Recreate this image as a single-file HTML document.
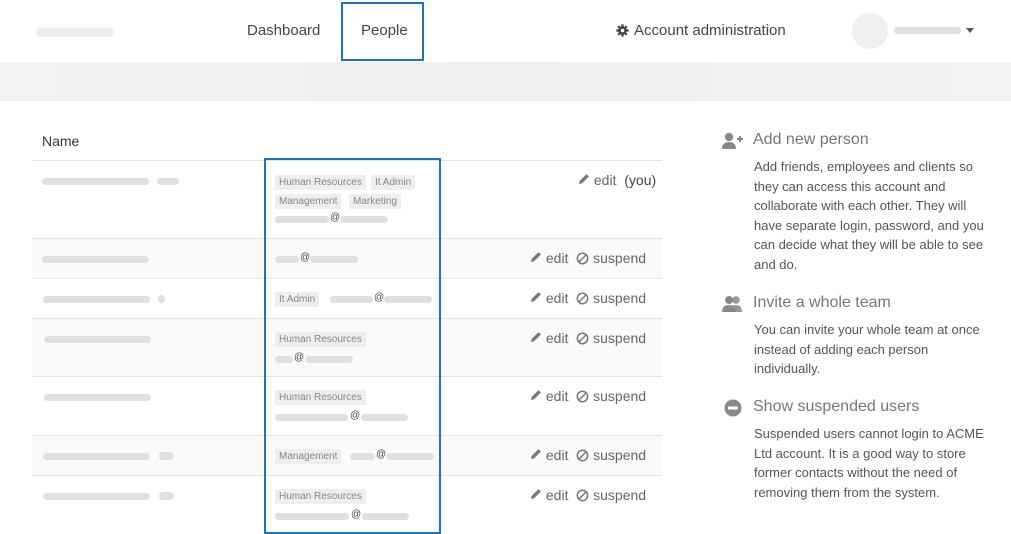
<!DOCTYPE html>
<html><head><meta charset="utf-8"><style>
*{margin:0;padding:0;box-sizing:border-box}
body{width:1011px;height:534px;overflow:hidden;background:#fff;font-family:"Liberation Sans",sans-serif;color:#555;position:relative}
.a{position:absolute}
.bar{position:absolute;height:7px;border-radius:4px;background:#e0e0e0}
.t{position:absolute;font-size:10px;color:#888;background:#eee;padding:0 4px;height:15px;line-height:15px;white-space:nowrap}
.at{position:absolute;font-size:10px;color:#444}
.line{position:absolute;left:32px;width:630px;height:1px;background:#e3e3e3}
.act{position:absolute;font-size:14px;color:#666;white-space:nowrap}
.side{position:absolute;left:754px;font-size:13px;line-height:19.6px;color:#555;white-space:nowrap}
.st{position:absolute;left:753px;font-size:16px;color:#777}
</style></head><body>
<div class="bar" style="left:36px;top:28px;width:78px;height:9px;background:#ececec"></div>
<div class="a" style="left:247px;top:22px;font-size:15px;color:#444">Dashboard</div>
<div class="a" style="left:341px;top:2px;width:83px;height:59px;border:2px solid #1e73be"></div>
<div class="a" style="left:361px;top:22px;font-size:15px;color:#444">People</div>
<svg class="a" style="left:616px;top:24px" width="13" height="13" viewBox="0 0 16 16"><g fill="#444"><circle cx="8" cy="8" r="5"/><rect x="6.5" y="0.5" width="3" height="15"/><rect x="0.5" y="6.5" width="15" height="3"/><rect x="6.5" y="0.5" width="3" height="15" transform="rotate(45 8 8)"/><rect x="6.5" y="0.5" width="3" height="15" transform="rotate(-45 8 8)"/></g><circle cx="8" cy="8" r="2.2" fill="#fff"/></svg>
<div class="a" style="left:634px;top:22px;font-size:15px;color:#444">Account administration</div>
<div class="a" style="left:852px;top:13px;width:36px;height:36px;border-radius:50%;background:#efefef"></div>
<div class="bar" style="left:894px;top:27px;width:67px;height:7px"></div>
<div class="a" style="left:966px;top:28px;width:0;height:0;border-left:4px solid transparent;border-right:4px solid transparent;border-top:5px solid #555"></div>
<div class="a" style="left:0;top:62px;width:1011px;height:39px;background:linear-gradient(90deg,#f3f3f3,#efefef 50%,#f3f3f3)"></div>

<div class="a" style="left:42px;top:133px;font-size:14px;color:#333">Name</div>
<div class="a" style="left:32px;top:238px;width:630px;height:40px;background:#fafafa"></div>
<div class="a" style="left:32px;top:318px;width:630px;height:58px;background:#fafafa"></div>
<div class="a" style="left:32px;top:435px;width:630px;height:40px;background:#fafafa"></div>
<div class="line" style="top:160px"></div>
<div class="line" style="top:238px"></div>
<div class="line" style="top:278px"></div>
<div class="line" style="top:318px"></div>
<div class="line" style="top:376px"></div>
<div class="line" style="top:435px"></div>
<div class="line" style="top:475px"></div>

<div class="bar" style="left:42px;top:178px;width:107px"></div>
<div class="bar" style="left:157px;top:178px;width:22px"></div>
<div class="bar" style="left:42px;top:256px;width:107px"></div>
<div class="bar" style="left:43px;top:296px;width:107px"></div>
<div class="bar" style="left:158px;top:295px;width:7px;height:8px"></div>
<div class="bar" style="left:44px;top:336px;width:107px"></div>
<div class="bar" style="left:44px;top:394px;width:107px"></div>
<div class="bar" style="left:43px;top:453px;width:107px"></div>
<div class="bar" style="left:159px;top:452px;width:15px;height:8px"></div>
<div class="bar" style="left:43px;top:493px;width:107px"></div>
<div class="bar" style="left:159px;top:492px;width:15px;height:8px"></div>

<div class="t" style="left:275px;top:175px">Human Resources</div>
<div class="t" style="left:371px;top:175px">It Admin</div>
<div class="t" style="left:275px;top:194px">Management</div>
<div class="t" style="left:349px;top:194px">Marketing</div>
<div class="bar" style="left:275px;top:216px;width:54px"></div><div class="at" style="left:330px;top:212px">@</div><div class="bar" style="left:340px;top:216px;width:48px"></div>
<div class="bar" style="left:275px;top:256px;width:24px"></div><div class="at" style="left:300px;top:252px">@</div><div class="bar" style="left:310px;top:256px;width:48px"></div>
<div class="t" style="left:275px;top:292px">It Admin</div>
<div class="bar" style="left:330px;top:296px;width:43px"></div><div class="at" style="left:374px;top:292px">@</div><div class="bar" style="left:384px;top:296px;width:48px"></div>
<div class="t" style="left:275px;top:332px">Human Resources</div>
<div class="bar" style="left:275px;top:356px;width:18px"></div><div class="at" style="left:294px;top:352px">@</div><div class="bar" style="left:305px;top:356px;width:48px"></div>
<div class="t" style="left:275px;top:390px">Human Resources</div>
<div class="bar" style="left:275px;top:414px;width:73px"></div><div class="at" style="left:350px;top:410px">@</div><div class="bar" style="left:361px;top:414px;width:47px"></div>
<div class="t" style="left:275px;top:449px">Management</div>
<div class="bar" style="left:350px;top:453px;width:25px"></div><div class="at" style="left:376px;top:449px">@</div><div class="bar" style="left:386px;top:453px;width:48px"></div>
<div class="t" style="left:275px;top:489px">Human Resources</div>
<div class="bar" style="left:275px;top:513px;width:74px"></div><div class="at" style="left:351px;top:509px">@</div><div class="bar" style="left:362px;top:513px;width:47px"></div>

<div class="a" style="left:264px;top:158px;width:177px;height:376px;border:2px solid #1e73be"></div>

<div class="act" style="left:578px;top:172px"><svg width="12" height="12" viewBox="0 0 12 12"><path d="M1 11l.6-3L8.5 1.1l2.4 2.4L4 10.4z" fill="#777"/></svg> edit &nbsp;<span style="color:#444">(you)</span></div>
<div class="act" style="left:530px;top:250px"><svg width="12" height="12" viewBox="0 0 12 12"><path d="M1 11l.6-3L8.5 1.1l2.4 2.4L4 10.4z" fill="#777"/></svg> edit &nbsp;<svg width="13" height="13" viewBox="0 0 14 14" style="vertical-align:-2px"><circle cx="7" cy="7" r="5.6" fill="none" stroke="#777" stroke-width="1.6"/><path d="M3 11L11 3" stroke="#777" stroke-width="1.6"/></svg> suspend</div>
<div class="act" style="left:530px;top:290px"><svg width="12" height="12" viewBox="0 0 12 12"><path d="M1 11l.6-3L8.5 1.1l2.4 2.4L4 10.4z" fill="#777"/></svg> edit &nbsp;<svg width="13" height="13" viewBox="0 0 14 14" style="vertical-align:-2px"><circle cx="7" cy="7" r="5.6" fill="none" stroke="#777" stroke-width="1.6"/><path d="M3 11L11 3" stroke="#777" stroke-width="1.6"/></svg> suspend</div>
<div class="act" style="left:530px;top:330px"><svg width="12" height="12" viewBox="0 0 12 12"><path d="M1 11l.6-3L8.5 1.1l2.4 2.4L4 10.4z" fill="#777"/></svg> edit &nbsp;<svg width="13" height="13" viewBox="0 0 14 14" style="vertical-align:-2px"><circle cx="7" cy="7" r="5.6" fill="none" stroke="#777" stroke-width="1.6"/><path d="M3 11L11 3" stroke="#777" stroke-width="1.6"/></svg> suspend</div>
<div class="act" style="left:530px;top:388px"><svg width="12" height="12" viewBox="0 0 12 12"><path d="M1 11l.6-3L8.5 1.1l2.4 2.4L4 10.4z" fill="#777"/></svg> edit &nbsp;<svg width="13" height="13" viewBox="0 0 14 14" style="vertical-align:-2px"><circle cx="7" cy="7" r="5.6" fill="none" stroke="#777" stroke-width="1.6"/><path d="M3 11L11 3" stroke="#777" stroke-width="1.6"/></svg> suspend</div>
<div class="act" style="left:530px;top:447px"><svg width="12" height="12" viewBox="0 0 12 12"><path d="M1 11l.6-3L8.5 1.1l2.4 2.4L4 10.4z" fill="#777"/></svg> edit &nbsp;<svg width="13" height="13" viewBox="0 0 14 14" style="vertical-align:-2px"><circle cx="7" cy="7" r="5.6" fill="none" stroke="#777" stroke-width="1.6"/><path d="M3 11L11 3" stroke="#777" stroke-width="1.6"/></svg> suspend</div>
<div class="act" style="left:530px;top:487px"><svg width="12" height="12" viewBox="0 0 12 12"><path d="M1 11l.6-3L8.5 1.1l2.4 2.4L4 10.4z" fill="#777"/></svg> edit &nbsp;<svg width="13" height="13" viewBox="0 0 14 14" style="vertical-align:-2px"><circle cx="7" cy="7" r="5.6" fill="none" stroke="#777" stroke-width="1.6"/><path d="M3 11L11 3" stroke="#777" stroke-width="1.6"/></svg> suspend</div>

<svg class="a" style="left:722px;top:132px" width="22" height="18" viewBox="0 0 22 18"><circle cx="7" cy="5" r="4.2" fill="#888"/><path d="M0 17c0-5 3-7 7-7s7 2 7 7z" fill="#888"/><path d="M15 7h6M18 4v6" stroke="#888" stroke-width="2"/></svg>
<div class="st" style="top:131px">Add new person</div>
<div class="side" style="top:157px">Add friends, employees and clients so<br>they can access this account and<br>collaborate with each other. They will<br>have separate login, password, and you<br>can decide what they will be able to see<br>and do.</div>
<svg class="a" style="left:722px;top:295px" width="22" height="18" viewBox="0 0 22 18"><circle cx="14" cy="5" r="3.8" fill="#999"/><path d="M8 17c0-5 2.5-7 6-7s6 2 6 7z" fill="#999"/><circle cx="7" cy="5" r="4" fill="#888"/><path d="M0 17c0-5 3-7 7-7s6.5 2 6.5 7z" fill="#888"/></svg>
<div class="st" style="top:294px">Invite a whole team</div>
<div class="side" style="top:320px">You can invite your whole team at once<br>instead of adding each person<br>individually.</div>
<svg class="a" style="left:724px;top:399px" width="18" height="18" viewBox="0 0 18 18"><circle cx="9" cy="9" r="8.5" fill="#888"/><rect x="4" y="7.5" width="10" height="3" fill="#fff"/></svg>
<div class="st" style="top:398px">Show suspended users</div>
<div class="side" style="top:424px">Suspended users cannot login to ACME<br>Ltd account. It is a good way to store<br>former contacts without the need of<br>removing them from the system.</div>
</body></html>
